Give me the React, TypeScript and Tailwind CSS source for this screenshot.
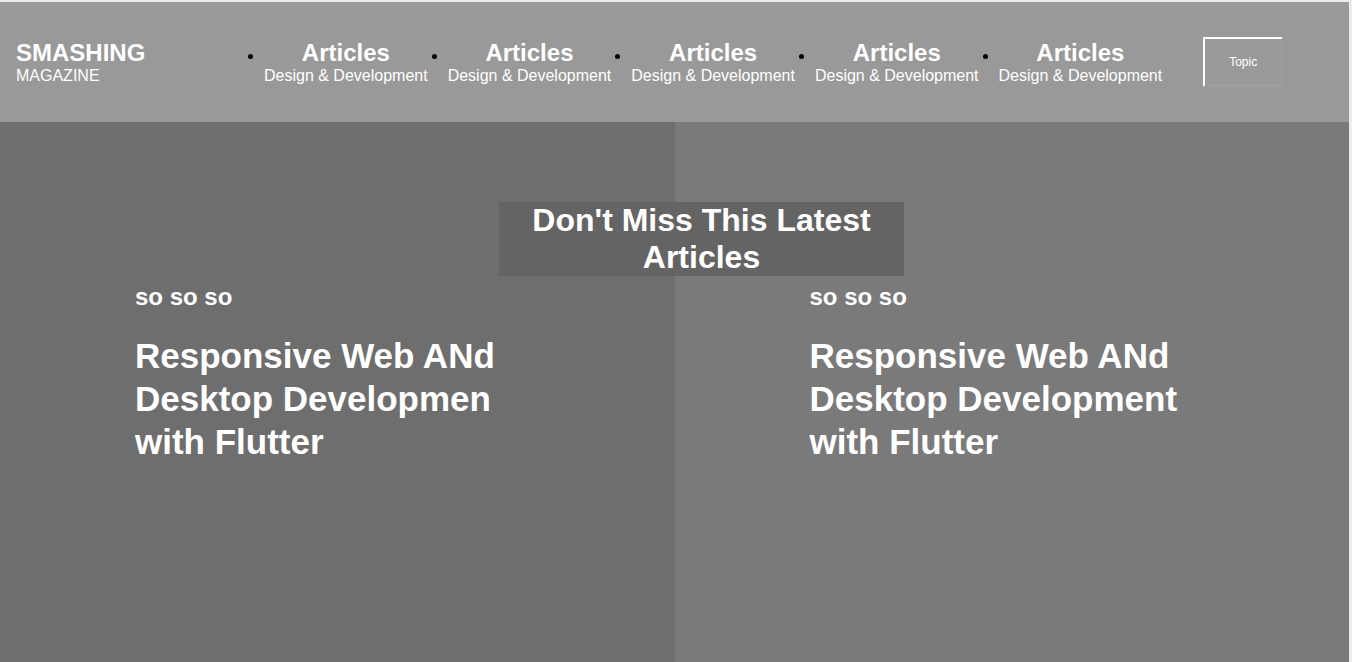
import React from "react";

const NAV_ITEMS = [1, 2, 3, 4, 5];

const CARDS = [
  {
    id: "left",
    bg: "bg-[#6e6e6e]",
    tag: "so so so",
    title: ["Responsive Web ANd", "Desktop Developmen", "with Flutter"],
  },
  {
    id: "right",
    bg: "bg-[#7a7a7a]",
    tag: "so so so",
    title: ["Responsive Web ANd", "Desktop Development", "with Flutter"],
  },
];

function Header() {
  return (
    <header className="flex h-[120px] items-center bg-[#999999] pl-[16px] text-white">
      {/* Logo */}
      <div className="w-[232px] shrink-0">
        <div className="text-[24px] font-bold leading-[28px]">SMASHING</div>
        <div className="text-[16px] leading-[18px]">MAGAZINE</div>
      </div>

      {/* Nav */}
      <ul className="flex">
        {NAV_ITEMS.map((n) => (
          <li key={n} className="flex items-start">
            <span className="mt-[15px] h-[5px] w-[5px] shrink-0 rounded-full bg-black" />
            <div className="ml-[11px] mr-[4px] flex flex-col items-center">
              <span className="text-[24px] font-bold leading-[28px]">Articles</span>
              <span className="whitespace-nowrap text-[16px] leading-[18px]">
                Design &amp; Development
              </span>
            </div>
          </li>
        ))}
      </ul>

      <button className="ml-[37px] flex h-[50px] w-[80px] items-center justify-center border-2 border-b-[#9e9e9e] border-l-white border-r-[#9e9e9e] border-t-white bg-[#9a9a9a] text-[12px] text-white">
        Topic
      </button>
    </header>
  );
}

export default function App() {
  return (
    <div
      className="min-h-screen bg-[#ececec] pt-[2px]"
      style={{ fontFamily: '"Liberation Sans", Arial, sans-serif' }}
    >
      <div className="w-[1349px]">
        <Header />

        <main className="relative flex h-[560px] text-white">
          {CARDS.map((card) => (
            <section key={card.id} className={`flex-1 pl-[135px] pt-[161px] ${card.bg}`}>
              <h3 className="text-[24px] font-bold leading-[28px]">{card.tag}</h3>
              <h2 className="mt-[23px] text-[35px] font-bold leading-[43px]">
                {card.title.map((line) => (
                  <div key={line}>{line}</div>
                ))}
              </h2>
            </section>
          ))}

          {/* Overlay heading */}
          <h1 className="absolute left-[499px] top-[80px] w-[405px] bg-[#646464] text-center text-[32px] font-bold leading-[37px]">
            Don&apos;t Miss This Latest Articles
          </h1>
        </main>
      </div>
    </div>
  );
}
